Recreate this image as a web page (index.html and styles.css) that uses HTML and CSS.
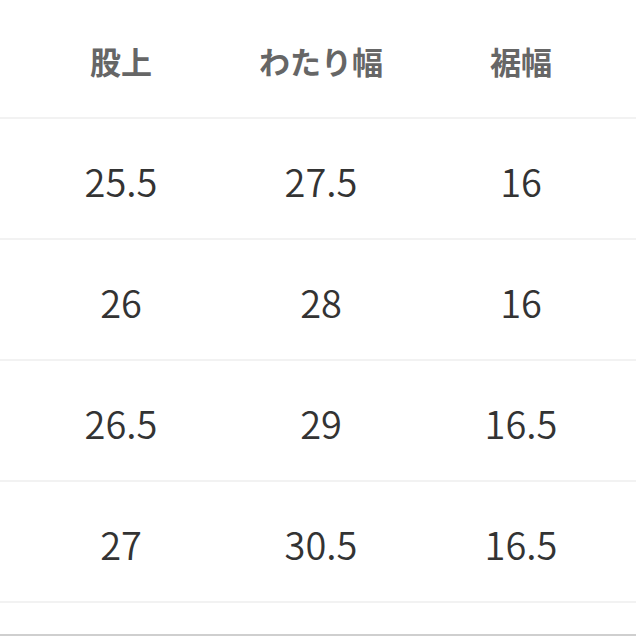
FILE: index.html
```html
<!DOCTYPE html>
<html lang="ja">
<head>
<meta charset="utf-8">
<link rel="stylesheet" href="styles.css">
</head>
<body>
<div class="table">
  <div class="row head">
    <div class="cell">股上</div>
    <div class="cell">わたり幅</div>
    <div class="cell">裾幅</div>
  </div>
  <div class="row">
    <div class="cell">25.5</div>
    <div class="cell">27.5</div>
    <div class="cell">16</div>
  </div>
  <div class="row">
    <div class="cell">26</div>
    <div class="cell">28</div>
    <div class="cell">16</div>
  </div>
  <div class="row">
    <div class="cell">26.5</div>
    <div class="cell">29</div>
    <div class="cell">16.5</div>
  </div>
  <div class="row">
    <div class="cell">27</div>
    <div class="cell">30.5</div>
    <div class="cell">16.5</div>
  </div>
  <div class="tail"></div>
</div>
</body>
</html>
```
FILE: styles.css
```css
html, body {
  margin: 0;
  padding: 0;
  background: #fff;
}
body {
  width: 636px;
  height: 636px;
  overflow: hidden;
  font-family: "Noto Sans CJK JP", "Noto Sans", sans-serif;
}
.table {
  display: flex;
  flex-direction: column;
}
.row {
  display: grid;
  grid-template-columns: 200px 200px 200px;
  padding-left: 21px;
  height: 119px;
  border-bottom: 2px solid #f2f2f2;
  align-items: center;
  color: #333;
  font-size: 38px;
  font-weight: 350;
}
.row.head {
  height: 117px;
  color: #666;
  font-size: 31px;
  font-weight: 700;
}
.cell {
  text-align: center;
  padding-top: 3px;
}
.tail {
  height: 31px;
  border-bottom: 2px solid #cfcfcf;
}
```
